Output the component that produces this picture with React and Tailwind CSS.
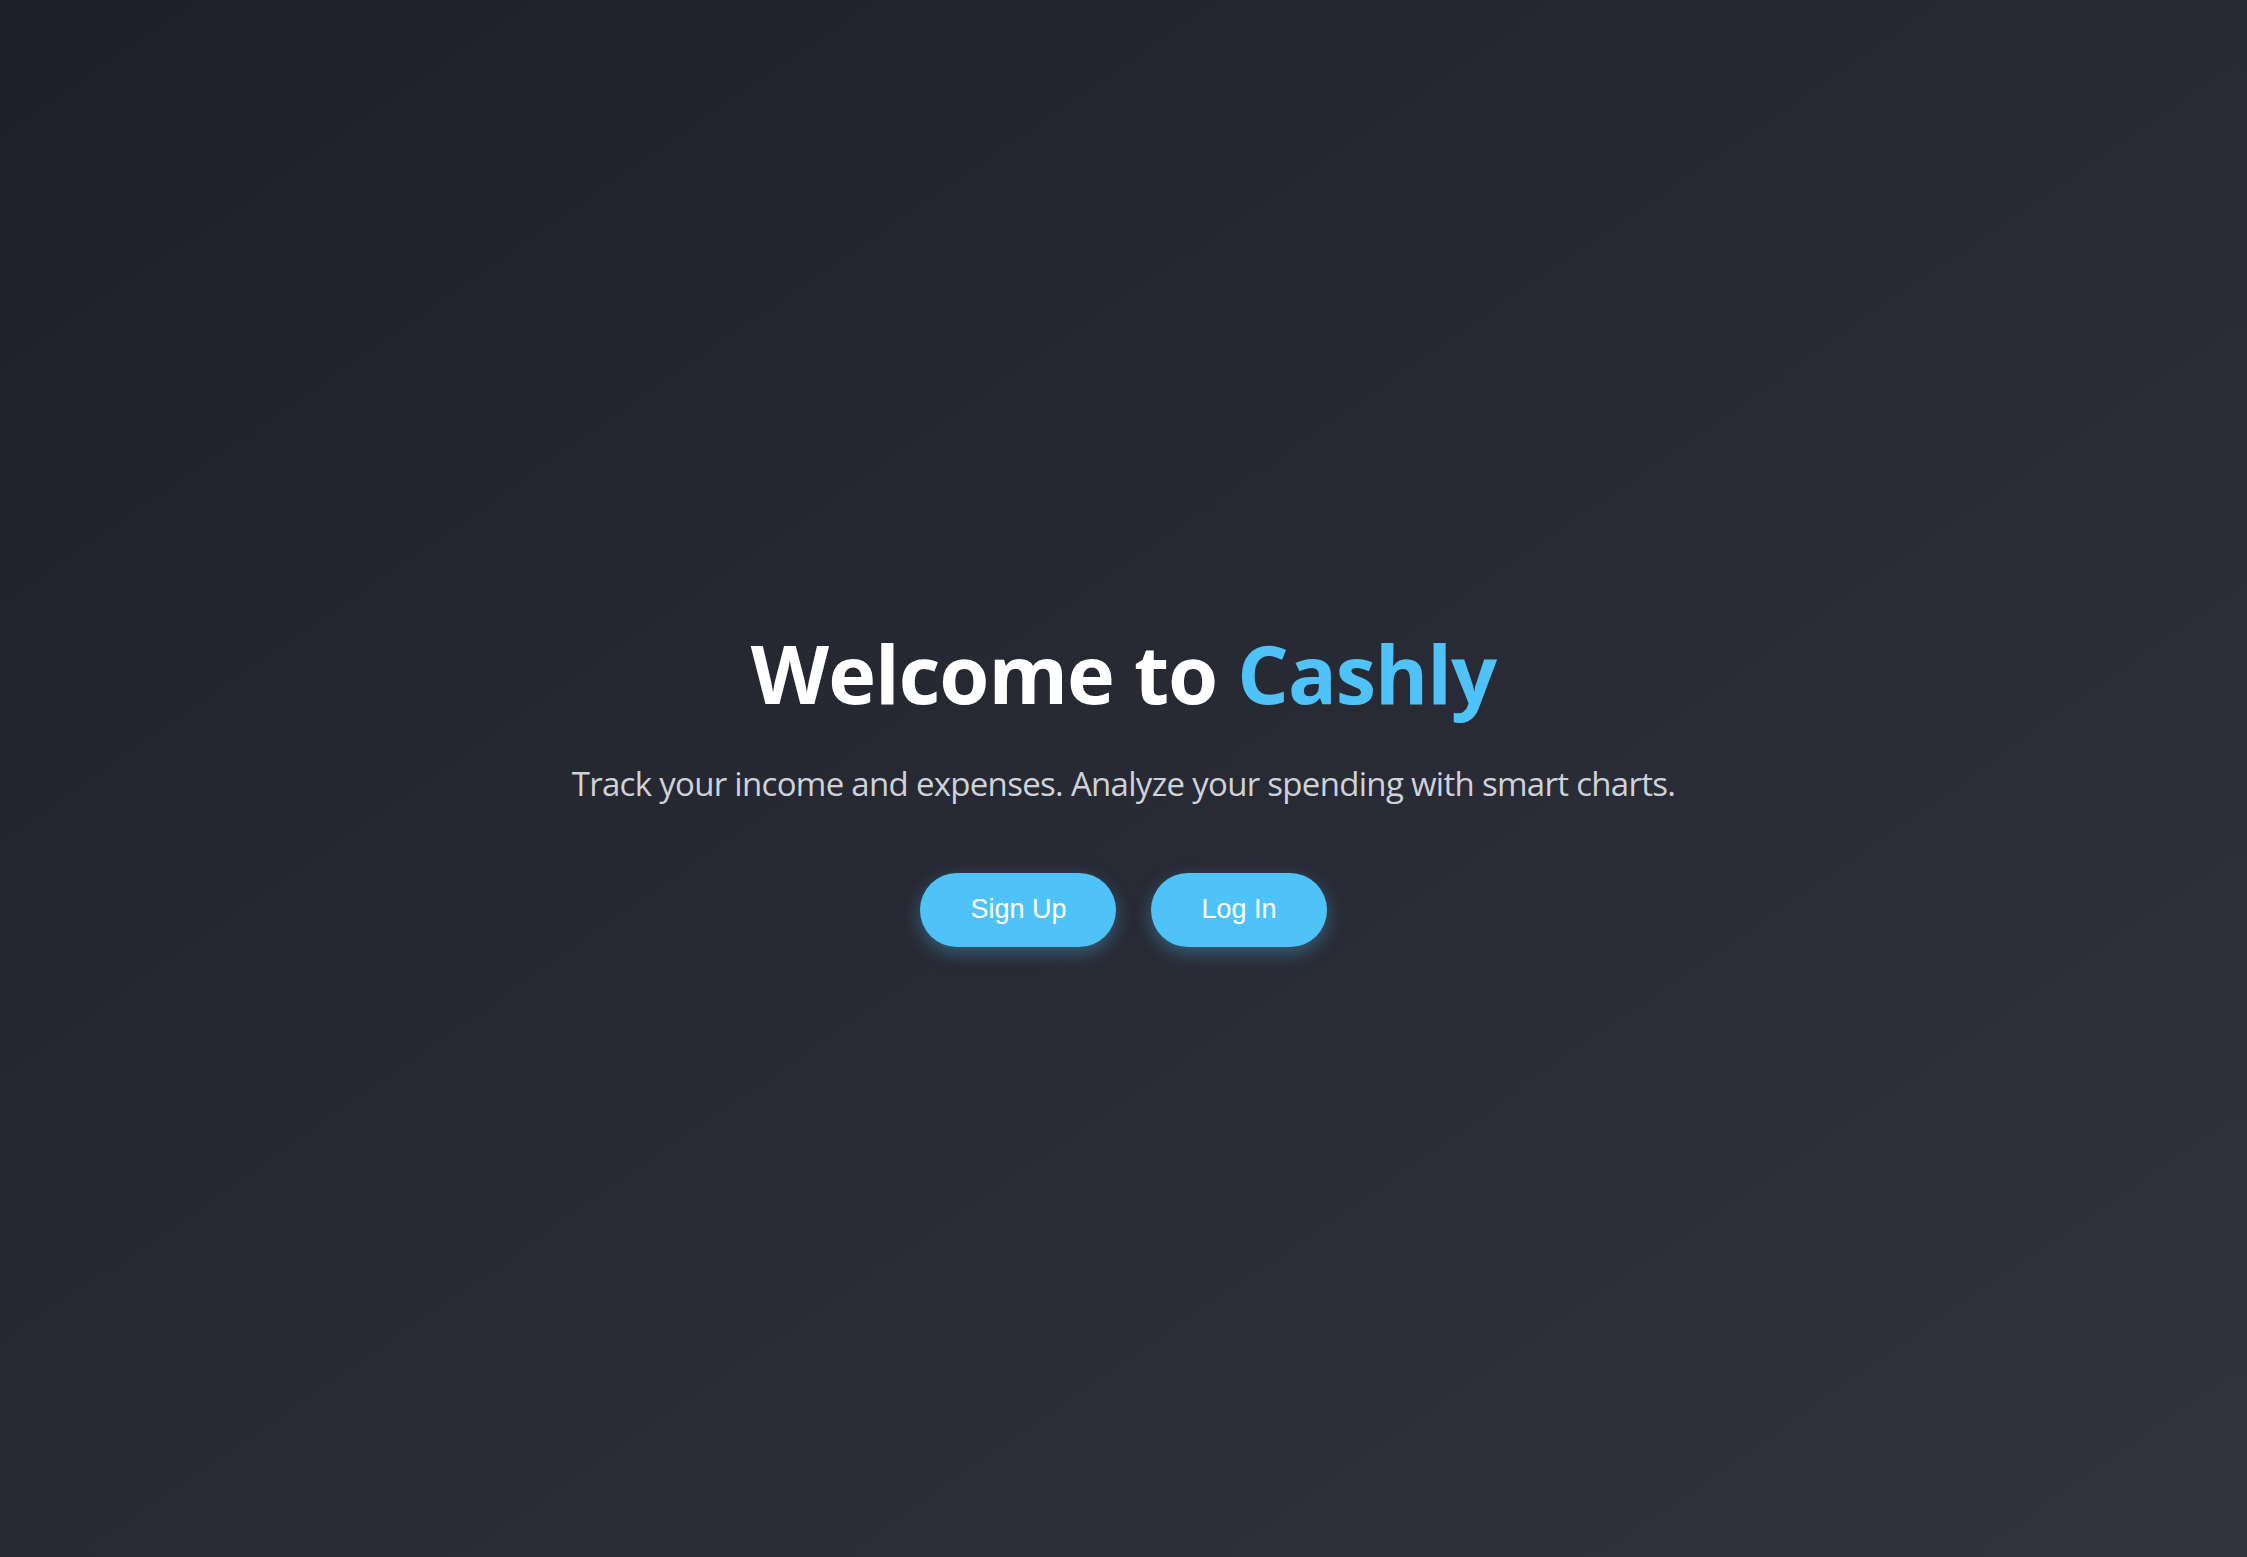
import React from "react";

const App = () => {
  return (
    <div className="min-h-screen w-full flex flex-col items-center justify-center bg-gradient-to-br from-[#1e2029] to-[#31333f] font-['Open_Sans',sans-serif]">
      <div className="flex flex-col items-center text-center pt-[14px]">
        <h1 className="text-[81px] font-bold leading-[1.2] text-white tracking-[-1px]">
          Welcome to <span className="text-[#4fc3f7]">Cashly</span>
        </h1>
        <p className="mt-[41px] text-[33px] leading-[1.3] text-[#cfd2d9] tracking-[-0.7px]">
          Track your income and expenses. Analyze your spending with smart charts.
        </p>
        <div className="mt-[67px] flex gap-[35px] font-['Liberation_Sans',Arial,sans-serif]">
          <button className="h-[74px] px-[50px] rounded-full bg-[#4fc3f7] text-white text-[27px] shadow-[0_6px_18px_rgba(79,195,247,0.35)]">
            Sign Up
          </button>
          <button className="h-[74px] px-[50px] rounded-full bg-[#4fc3f7] text-white text-[27px] shadow-[0_6px_18px_rgba(79,195,247,0.35)]">
            Log In
          </button>
        </div>
      </div>
    </div>
  );
};

export default App;
